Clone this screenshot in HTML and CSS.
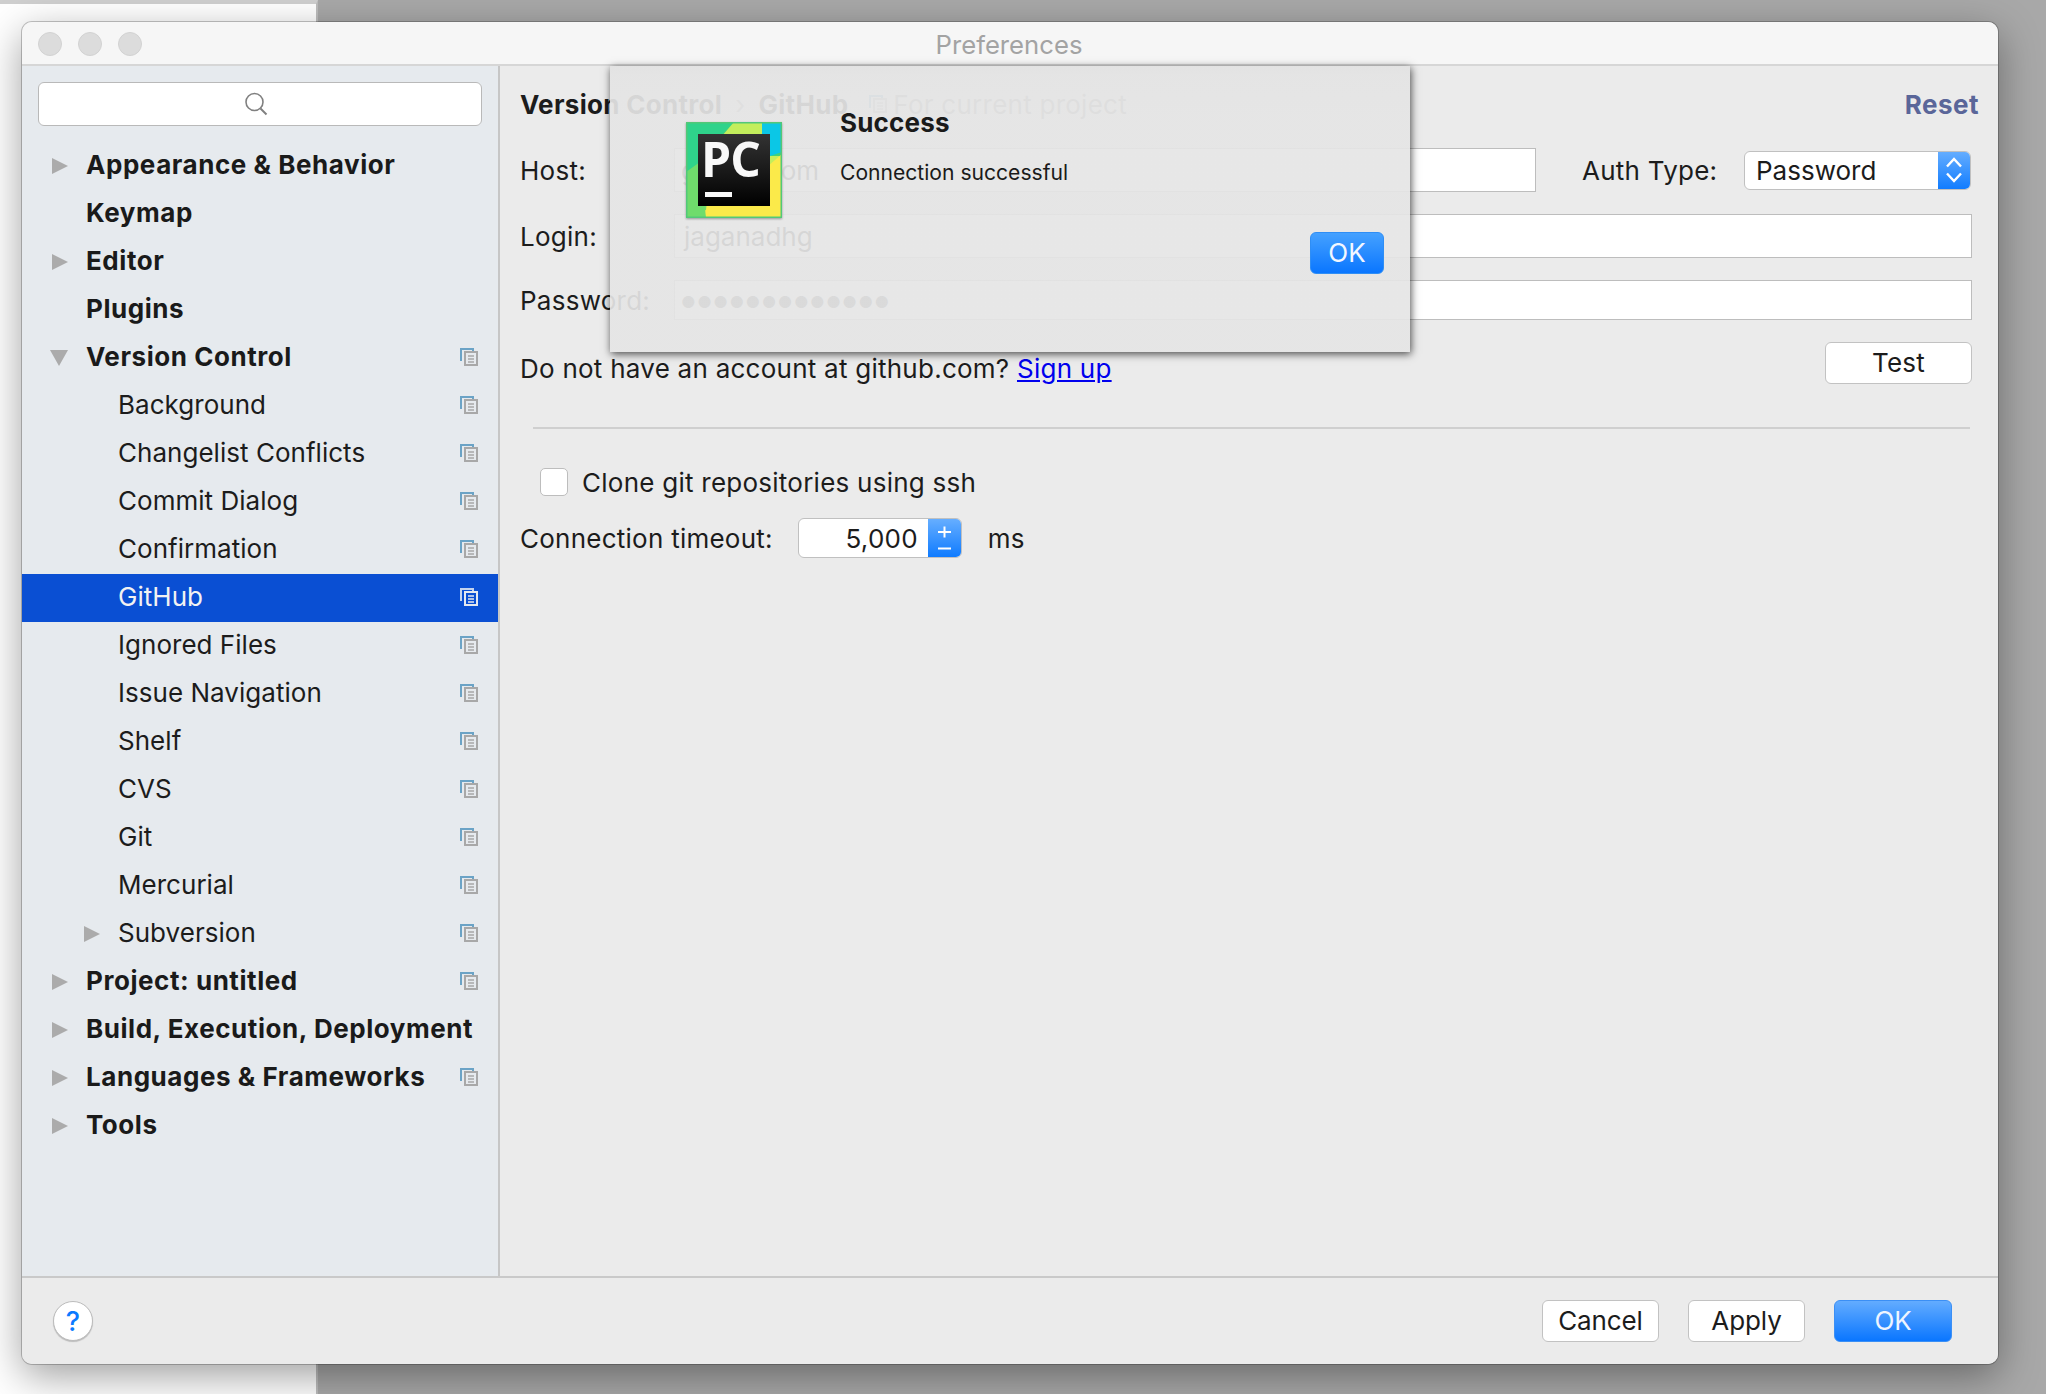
FILE: index.html
```html
<!DOCTYPE html>
<html lang="en">
<head>
<meta charset="utf-8">
<title>Preferences</title>
<link rel="stylesheet" href="styles.css">
</head>
<body>
<div class="desk-left"></div>
<div class="window">
  <header class="titlebar">
    <div class="lights"><i></i><i></i><i></i></div>
    <div class="title">Preferences</div>
  </header>
  <div class="body">
    <aside class="sidebar">
      <div class="search">
        <svg width="26" height="26" viewBox="0 0 26 26"><circle cx="11.5" cy="11" r="8.5" fill="none" stroke="#808080" stroke-width="1.6"/><path d="M17.5 17.5l6 6" stroke="#808080" stroke-width="2" fill="none"/></svg>
      </div>
      <ul class="tree">
        <li class="row top"><span class="arrow right"></span><span class="label">Appearance &amp; Behavior</span></li>
        <li class="row top"><span class="arrow"></span><span class="label">Keymap</span></li>
        <li class="row top"><span class="arrow right"></span><span class="label">Editor</span></li>
        <li class="row top"><span class="arrow"></span><span class="label">Plugins</span></li>
        <li class="row top"><span class="arrow down"></span><span class="label">Version Control</span><svg class="copy" viewBox="0 0 18 18"><use href="#copyicon"/></svg></li>
        <li class="row child"><span class="label">Background</span><svg class="copy" viewBox="0 0 18 18"><use href="#copyicon"/></svg></li>
        <li class="row child"><span class="label">Changelist Conflicts</span><svg class="copy" viewBox="0 0 18 18"><use href="#copyicon"/></svg></li>
        <li class="row child"><span class="label">Commit Dialog</span><svg class="copy" viewBox="0 0 18 18"><use href="#copyicon"/></svg></li>
        <li class="row child"><span class="label">Confirmation</span><svg class="copy" viewBox="0 0 18 18"><use href="#copyicon"/></svg></li>
        <li class="row child selected"><span class="label">GitHub</span><svg class="copy" viewBox="0 0 18 18"><path d="M1 13V1h12v2" fill="none" stroke="#c3d3ee" stroke-width="2"/><path d="M5 4h12v13H5z" fill="#0a4fd3" stroke="#e4e8f0" stroke-width="2"/><path d="M8 8h6M8 11h6M8 14h6" stroke="#e4e8f0" stroke-width="1.6"/></svg></li>
        <li class="row child"><span class="label">Ignored Files</span><svg class="copy" viewBox="0 0 18 18"><use href="#copyicon"/></svg></li>
        <li class="row child"><span class="label">Issue Navigation</span><svg class="copy" viewBox="0 0 18 18"><use href="#copyicon"/></svg></li>
        <li class="row child"><span class="label">Shelf</span><svg class="copy" viewBox="0 0 18 18"><use href="#copyicon"/></svg></li>
        <li class="row child"><span class="label">CVS</span><svg class="copy" viewBox="0 0 18 18"><use href="#copyicon"/></svg></li>
        <li class="row child"><span class="label">Git</span><svg class="copy" viewBox="0 0 18 18"><use href="#copyicon"/></svg></li>
        <li class="row child"><span class="label">Mercurial</span><svg class="copy" viewBox="0 0 18 18"><use href="#copyicon"/></svg></li>
        <li class="row child nested"><span class="arrow right"></span><span class="label">Subversion</span><svg class="copy" viewBox="0 0 18 18"><use href="#copyicon"/></svg></li>
        <li class="row top"><span class="arrow right"></span><span class="label">Project: untitled</span><svg class="copy" viewBox="0 0 18 18"><use href="#copyicon"/></svg></li>
        <li class="row top"><span class="arrow right"></span><span class="label">Build, Execution, Deployment</span></li>
        <li class="row top"><span class="arrow right"></span><span class="label">Languages &amp; Frameworks</span><svg class="copy" viewBox="0 0 18 18"><use href="#copyicon"/></svg></li>
        <li class="row top"><span class="arrow right"></span><span class="label">Tools</span></li>
      </ul>
    </aside>
    <main class="panel">
      <div class="crumbs">
        <div class="crumb-left"><b>Version Control</b><span class="sep">›</span><b>GitHub</b><svg class="scope-icon" viewBox="0 0 18 18"><use href="#copyicon"/></svg><span class="scope">For current project</span></div>
        <a class="reset">Reset</a>
      </div>
      <div class="line host-line">
        <label class="lab">Host:</label>
        <div class="input host"><span class="value">github.com</span></div>
        <span class="auth-label">Auth Type:</span>
        <div class="select"><span>Password</span><div class="stepper-arrows"><svg width="18" height="32" viewBox="0 0 18 32"><path d="M2 12.500l7-7.500 7 7.500M2 19.500l7 7.500 7-7.500" fill="none" stroke="#fff" stroke-width="2.4"/></svg></div></div>
      </div>
      <div class="line login-line">
        <label class="lab">Login:</label>
        <div class="input wide tall"><span class="value">jaganadhg</span></div>
      </div>
      <div class="line pass-line">
        <label class="lab">Password:</label>
        <div class="input wide"><span class="value dots">●●●●●●●●●●●●●</span></div>
      </div>
      <div class="line sign-line">
        <div class="signup">Do not have an account at github.com? <a class="link">Sign up</a></div>
        <button class="btn test">Test</button>
      </div>
      <hr class="rule">
      <div class="check-line"><span class="checkbox"></span><span>Clone git repositories using ssh</span></div>
      <div class="timeout-line">
        <span>Connection timeout:</span>
        <div class="spinner"><span class="num">5,000</span><div class="plusminus"><svg width="33" height="38" viewBox="0 0 33 38"><path d="M10 13h13M16.500 7.500v11M10 29.500h13" stroke="#fff" stroke-width="2" fill="none"/></svg></div></div>
        <span class="ms">ms</span>
      </div>
    </main>
  </div>
  <footer class="footer">
    <div class="help">?</div>
    <div class="actions">
      <button class="btn foot">Cancel</button>
      <button class="btn foot">Apply</button>
      <button class="btn foot primary">OK</button>
    </div>
  </footer>
</div>
<div class="dialog">
  <svg class="logo" viewBox="0 0 96 96">
    <rect width="96" height="96" fill="#3fd07e"/>
    <path d="M0 0h48L30 18 10 70 0 60z" fill="#2fd38b"/>
    <path d="M36 14L48 0h28v34L96 34V70H22L12 50z" fill="#c3ee5c"/>
    <path d="M76 0h20v30l-12 4-8-14z" fill="#0bc7e6"/>
    <path d="M0 60l10-10 16 44H0z" fill="#79dd68"/>
    <path d="M96 32V96H20L0 96l20-8 6-50 40 20z" fill="#fbea4a"/>
    <path d="M0 50l14-10 6 56H0z" fill="#6fdc6c"/>
    <rect x="0.750" y="0.750" width="94.500" height="94.500" fill="none" stroke="#52c878" stroke-width="1.500"/>
    <defs><linearGradient id="pcg" x1="0" y1="0" x2="0" y2="1"><stop offset="0" stop-color="#333"/><stop offset="1" stop-color="#000"/></linearGradient></defs>
    <rect x="12" y="12" width="72" height="72" fill="url(#pcg)"/>
    <text x="15" y="55" class="logo-text">PC</text>
    <rect x="19" y="70" width="27" height="5" fill="#f8f8f8"/>
  </svg>
  <div class="msg">
    <div class="msg-title">Success</div>
    <div class="msg-text">Connection successful</div>
  </div>
  <button class="btn dialog-ok">OK</button>
</div>
<svg class="defs" width="0" height="0"><defs><g id="copyicon"><path d="M1 13V1h12v2" fill="none" stroke="#6ba3c6" stroke-width="2"/><path d="M5 4h12v13H5z" fill="#e6eaee" stroke="#a8a8a8" stroke-width="2"/><path d="M8 8h6M8 11h6M8 14h6" stroke="#a8a8a8" stroke-width="1.600"/></g></defs></svg>
</body>
</html>
```
FILE: styles.css
```css
* { box-sizing: border-box; }
html, body { margin: 0; height: 100%; }
body {
  width: 2046px; height: 1394px; overflow: hidden; position: relative;
  background: #a8a8a8;
  font-family: Inter, "Liberation Sans", sans-serif;
  font-size: 26px; letter-spacing: .25px; color: #1c1c1c;
}
.desk-left {
  position: absolute; left: 0; top: 0; width: 318px; height: 1394px;
  background: #fff; border-top: 4px solid #cfcfcf; border-right: 2px solid #bdbdbd;
}
.window {
  position: absolute; left: 22px; top: 22px; width: 1976px; height: 1342px;
  display: flex; flex-direction: column;
  background: #ebebeb; border-radius: 10px; overflow: hidden;
  box-shadow: 0 0 0 1px rgba(0,0,0,.22), 0 12px 40px rgba(0,0,0,.38);
}
.titlebar {
  height: 44px; flex: none; position: relative;
  background: #f6f6f6; border-bottom: 2px solid #d6d6d6;
  display: flex; align-items: center; justify-content: center;
}
.lights { position: absolute; left: 16px; top: 10px; display: flex; gap: 16px; }
.lights i { width: 24px; height: 24px; border-radius: 50%; background: #dcdcdc; border: 1px solid #d2d2d2; }
.title { color: #a3a3a3; font-size: 25.700px; letter-spacing: 0; padding: 2px 2px 0 0; }
.body { flex: 1; display: flex; min-height: 0; }
.sidebar {
  width: 478px; flex: none; background: #e6eaee; border-right: 2px solid #c6c6c6;
  padding-top: 16px;
}
.search {
  margin: 0 16px; height: 44px; background: #fff;
  border: 1px solid #b9b9b9; border-radius: 6px;
  display: flex; align-items: center; justify-content: center; padding-right: 8px;
}
.tree { list-style: none; margin: 15px 0 0; padding: 0; }
.row { height: 48px; display: flex; align-items: center; position: relative; padding-right: 20px; }
.row .label { flex: 1; white-space: nowrap; padding-bottom: 2px; }
.top { padding-left: 64px; font-weight: 700; letter-spacing: .55px; color: #1a1a1a; }
.child { padding-left: 96px; letter-spacing: .03px; }
.arrow { position: absolute; left: 30px; top: 17px; width: 0; height: 0; }
.arrow.right { border-left: 16px solid #ababab; border-top: 8px solid transparent; border-bottom: 8px solid transparent; }
.arrow.down { left: 28px; border-top: 16px solid #ababab; border-left: 9px solid transparent; border-right: 9px solid transparent; }
.nested .arrow { left: 62px; }
.copy { width: 18px; height: 18px; flex: none; }
.selected { background: linear-gradient(transparent 1px, #0a4fd3 1px); color: #f2f2f2; box-shadow: 0 1px 0 #0a4fd3; z-index: 1; }
.panel { flex: 1; padding: 0 26px 0 20px; min-width: 0; }
.crumbs { height: 78px; padding-bottom: 2px; display: flex; align-items: center; justify-content: space-between; }
.crumb-left { display: flex; align-items: center; white-space: nowrap; }
.crumb-left b { font-weight: 700; letter-spacing: .3px; }
.sep { margin: 0 13px; color: #9a9a9a; }
.scope-icon { width: 18px; height: 18px; margin-left: 21px; }
.scope { color: #8c8c8c; margin-left: 6px; }
.reset { font-weight: 700; letter-spacing: .5px; color: #5a6699; margin-right: -7px; }
.line { display: flex; align-items: center; }
.lab { width: 154px; flex: none; padding-top: 1px; }
.input { background: #fff; border: 1px solid #bdbdbd; display: flex; align-items: center; padding-left: 10px; }
.value { color: #222; padding-top: 1px; margin-left: -1px; letter-spacing: 0; }
.host .value { margin-left: -4px; }
.dots { font-size: 16px; letter-spacing: 1.500px; color: #555; margin-left: -4px; padding-top: 3px; }
.host-line { height: 44px; margin-top: 4px; }
.host { width: 862px; height: 44px; flex: none; }
.auth-label { margin-left: 46px; width: 162px; flex: none; white-space: nowrap; padding-top: 1px; }
.select {
  width: 227px; height: 39px; flex: none; background: #fff; border: 1px solid #c0c0c0; border-radius: 6px;
  display: flex; align-items: center; justify-content: space-between; padding-left: 11px; overflow: hidden; position: relative;
  letter-spacing: 0;
}
.stepper-arrows { width: 32px; height: 39px; background: linear-gradient(#66aeff,#0f7bff); display: flex; align-items: center; justify-content: center; }
.login-line { height: 44px; margin-top: 22px; }
.wide { width: 1298px; flex: none; }
.tall { height: 44px; }
.pass-line { height: 40px; margin-top: 22px; }
.pass-line .input { height: 40px; }
.sign-line { height: 42px; margin-top: 22px; justify-content: space-between; }
.signup { white-space: nowrap; padding-top: 10px; }
.link { color: #0000ee; text-decoration: underline; }
.btn {
  font: inherit; letter-spacing: inherit; color: #1c1c1c; background: #fff; border: 1px solid #c2c2c2; border-radius: 6px; padding: 0 0 2px;
}
.test { width: 147px; height: 42px; }
.rule { height: 2px; border: 0; margin: 43px 2px 0 13px; background: #cfcfcf; }
.check-line { display: flex; align-items: center; margin: 39px 0 0 20px; height: 28px; }
.checkbox { width: 28px; height: 28px; background: #fff; border: 1px solid #bdbdbd; border-radius: 5px; margin-right: 14px; }
.timeout-line { display: flex; align-items: center; margin-top: 22px; height: 40px; }
.spinner {
  margin-left: 25px; width: 164px; height: 40px; background: #fff; border: 1px solid #c0c0c0; border-radius: 6px;
  display: flex; justify-content: flex-end; align-items: center; overflow: hidden;
}
.num { padding-right: 10px; }
.plusminus { width: 33px; height: 38px; background: linear-gradient(#66aeff,#0f7bff); }
.ms { margin-left: 26px; }
.footer {
  height: 88px; flex: none; border-top: 2px solid #c9c9c9; display: flex; align-items: center; justify-content: space-between;
  padding: 0 46px 0 31px; background: #ebebeb;
}
.help {
  width: 40px; height: 40px; border-radius: 50%; background: #fff; border: 1px solid #bcbcbc; box-shadow: 0 1px 1px rgba(0,0,0,.2);
  color: #0a7aff; font-size: 27px; font-weight: 500; display: flex; align-items: center; justify-content: center;
}
.actions { display: flex; gap: 29px; }
.foot { width: 117px; height: 42px; letter-spacing: -.1px; }
.primary { width: 118px; background: linear-gradient(#63acff,#0a76ff); color: #eef5ff; border-color: #3b8ff5; }
.dialog {
  position: absolute; left: 610px; top: 66px; width: 800px; height: 286px;
  background: linear-gradient(rgba(226,226,226,.93), rgba(228,228,228,.93) 10px, rgba(229,229,229,.92) 51px);
  box-shadow: 1px 2px 8px rgba(0,0,0,.7);
}
.logo { position: absolute; left: 76px; top: 56px; width: 96px; height: 96px; filter: drop-shadow(0 1px 1px rgba(0,0,0,.35)); }
.logo-text { font-family: "Open Sans", Inter, sans-serif; font-weight: 700; font-size: 48px; letter-spacing: -1px; fill: #f8f8f8; }
.msg { position: absolute; left: 230px; top: 41px; }
.msg-title { font-weight: 700; font-size: 26px; letter-spacing: .2px; line-height: 32px; color: #1a1a1a; }
.msg-text { margin-top: 18px; font-size: 21.100px; letter-spacing: 0; line-height: 32px; color: #1a1a1a; white-space: nowrap; }
.dialog-ok {
  position: absolute; left: 700px; top: 166px; width: 74px; height: 42px; letter-spacing: 0;
  background: linear-gradient(#45a1ff,#0a76ff); color: #f2f7ff; border-color: #2f8ef5;
}
.defs { position: absolute; }
```
